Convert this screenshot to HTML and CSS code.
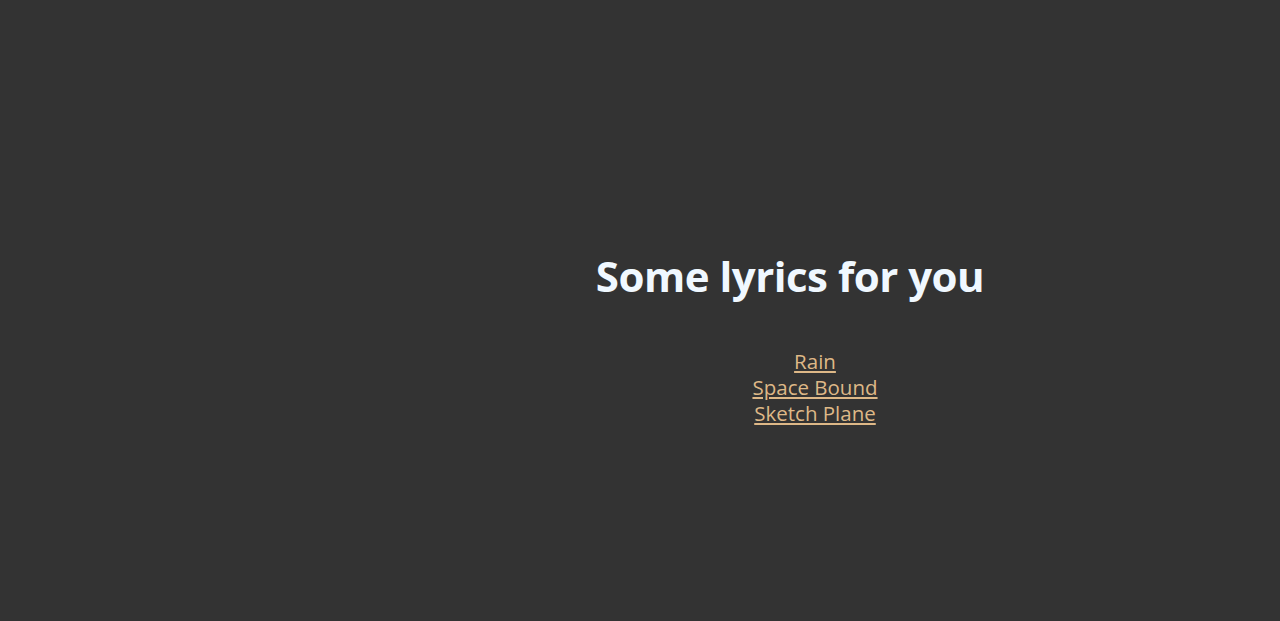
FILE: index.html
```html
<!DOCTYPE html>
<html lang="en">
<head>
<meta charset="utf-8">
<title>Some lyrics for you</title>
<link rel="stylesheet" href="styles.css">
</head>
<body>
<main class="page">
  <h1 class="title">Some lyrics for you</h1>
  <ul class="songs">
    <li><a href="#">Rain</a></li>
    <li><a href="#">Space Bound</a></li>
    <li><a href="#">Sketch Plane</a></li>
  </ul>
</main>
</body>
</html>
```
FILE: styles.css
```css
html, body {
  margin: 0;
  padding: 0;
  height: 100%;
  background: #333333;
}
body {
  font-family: "Open Sans", "Noto Sans", sans-serif;
}
.page {
  margin-left: 300px;
  padding-top: 245px;
  text-align: center;
}
.title {
  margin: 0;
  font-size: 42px;
  line-height: 62px;
  font-weight: 700;
  color: aliceblue;
  letter-spacing: -0.5px;
}
.songs {
  list-style: none;
  margin: 41px 0 0;
  padding: 0 0 0 50px;
  font-size: 20.5px;
  line-height: 26px;
}
.songs a {
  color: burlywood;
}
```
